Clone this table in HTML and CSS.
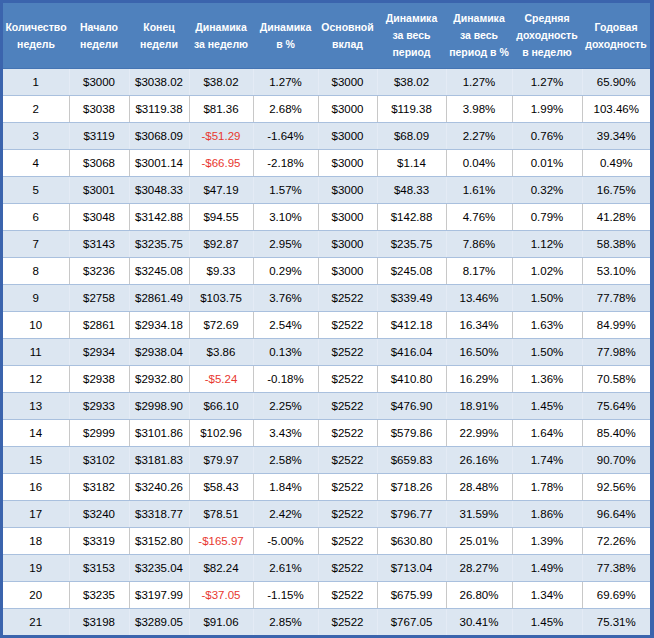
FILE: index.html
```html
<!DOCTYPE html>
<html lang="ru">
<head>
<meta charset="utf-8">
<title>Динамика</title>
<link rel="stylesheet" href="styles.css">
</head>
<body>
<div class="frame">
<table class="grid">
<colgroup>
<col class="c1"><col class="c2"><col class="c3"><col class="c4"><col class="c5"><col class="c6"><col class="c7"><col class="c8"><col class="c9"><col class="c10">
</colgroup>
<thead>
<tr>
<th>Количество<br>недель</th>
<th>Начало<br>недели</th>
<th>Конец<br>недели</th>
<th>Динамика<br>за неделю</th>
<th>Динамика<br>в %</th>
<th>Основной<br>вклад</th>
<th>Динамика<br>за весь<br>период</th>
<th>Динамика<br>за весь<br>период в %</th>
<th>Средняя<br>доходность<br>в неделю</th>
<th>Годовая<br>доходность</th>
</tr>
</thead>
<tbody>
<tr><td>1</td><td>$3000</td><td>$3038.02</td><td>$38.02</td><td>1.27%</td><td>$3000</td><td>$38.02</td><td>1.27%</td><td>1.27%</td><td>65.90%</td></tr>
<tr><td>2</td><td>$3038</td><td>$3119.38</td><td>$81.36</td><td>2.68%</td><td>$3000</td><td>$119.38</td><td>3.98%</td><td>1.99%</td><td>103.46%</td></tr>
<tr><td>3</td><td>$3119</td><td>$3068.09</td><td class="neg">-$51.29</td><td>-1.64%</td><td>$3000</td><td>$68.09</td><td>2.27%</td><td>0.76%</td><td>39.34%</td></tr>
<tr><td>4</td><td>$3068</td><td>$3001.14</td><td class="neg">-$66.95</td><td>-2.18%</td><td>$3000</td><td>$1.14</td><td>0.04%</td><td>0.01%</td><td>0.49%</td></tr>
<tr><td>5</td><td>$3001</td><td>$3048.33</td><td>$47.19</td><td>1.57%</td><td>$3000</td><td>$48.33</td><td>1.61%</td><td>0.32%</td><td>16.75%</td></tr>
<tr><td>6</td><td>$3048</td><td>$3142.88</td><td>$94.55</td><td>3.10%</td><td>$3000</td><td>$142.88</td><td>4.76%</td><td>0.79%</td><td>41.28%</td></tr>
<tr><td>7</td><td>$3143</td><td>$3235.75</td><td>$92.87</td><td>2.95%</td><td>$3000</td><td>$235.75</td><td>7.86%</td><td>1.12%</td><td>58.38%</td></tr>
<tr><td>8</td><td>$3236</td><td>$3245.08</td><td>$9.33</td><td>0.29%</td><td>$3000</td><td>$245.08</td><td>8.17%</td><td>1.02%</td><td>53.10%</td></tr>
<tr><td>9</td><td>$2758</td><td>$2861.49</td><td>$103.75</td><td>3.76%</td><td>$2522</td><td>$339.49</td><td>13.46%</td><td>1.50%</td><td>77.78%</td></tr>
<tr><td>10</td><td>$2861</td><td>$2934.18</td><td>$72.69</td><td>2.54%</td><td>$2522</td><td>$412.18</td><td>16.34%</td><td>1.63%</td><td>84.99%</td></tr>
<tr><td>11</td><td>$2934</td><td>$2938.04</td><td>$3.86</td><td>0.13%</td><td>$2522</td><td>$416.04</td><td>16.50%</td><td>1.50%</td><td>77.98%</td></tr>
<tr><td>12</td><td>$2938</td><td>$2932.80</td><td class="neg">-$5.24</td><td>-0.18%</td><td>$2522</td><td>$410.80</td><td>16.29%</td><td>1.36%</td><td>70.58%</td></tr>
<tr><td>13</td><td>$2933</td><td>$2998.90</td><td>$66.10</td><td>2.25%</td><td>$2522</td><td>$476.90</td><td>18.91%</td><td>1.45%</td><td>75.64%</td></tr>
<tr><td>14</td><td>$2999</td><td>$3101.86</td><td>$102.96</td><td>3.43%</td><td>$2522</td><td>$579.86</td><td>22.99%</td><td>1.64%</td><td>85.40%</td></tr>
<tr><td>15</td><td>$3102</td><td>$3181.83</td><td>$79.97</td><td>2.58%</td><td>$2522</td><td>$659.83</td><td>26.16%</td><td>1.74%</td><td>90.70%</td></tr>
<tr><td>16</td><td>$3182</td><td>$3240.26</td><td>$58.43</td><td>1.84%</td><td>$2522</td><td>$718.26</td><td>28.48%</td><td>1.78%</td><td>92.56%</td></tr>
<tr><td>17</td><td>$3240</td><td>$3318.77</td><td>$78.51</td><td>2.42%</td><td>$2522</td><td>$796.77</td><td>31.59%</td><td>1.86%</td><td>96.64%</td></tr>
<tr><td>18</td><td>$3319</td><td>$3152.80</td><td class="neg">-$165.97</td><td>-5.00%</td><td>$2522</td><td>$630.80</td><td>25.01%</td><td>1.39%</td><td>72.26%</td></tr>
<tr><td>19</td><td>$3153</td><td>$3235.04</td><td>$82.24</td><td>2.61%</td><td>$2522</td><td>$713.04</td><td>28.27%</td><td>1.49%</td><td>77.38%</td></tr>
<tr><td>20</td><td>$3235</td><td>$3197.99</td><td class="neg">-$37.05</td><td>-1.15%</td><td>$2522</td><td>$675.99</td><td>26.80%</td><td>1.34%</td><td>69.69%</td></tr>
<tr><td>21</td><td>$3198</td><td>$3289.05</td><td>$91.06</td><td>2.85%</td><td>$2522</td><td>$767.05</td><td>30.41%</td><td>1.45%</td><td>75.31%</td></tr>
</tbody>
</table>
</div>
</body>
</html>
```

FILE: styles.css
```css
html, body {
  margin: 0;
  padding: 0;
  background: #ffffff;
}

.frame {
  width: 647px;
  border: 3px solid #3b64ad;
  border-right-width: 4px;
  background: #ffffff;
}

.grid {
  width: 647px;
  table-layout: fixed;
  border-collapse: collapse;
  border-spacing: 0;
  font-family: "Liberation Sans", Arial, sans-serif;
}

.c1 { width: 66px; }
.c2 { width: 60px; }
.c3 { width: 60px; }
.c4 { width: 64px; }
.c5 { width: 65px; }
.c6 { width: 59px; }
.c7 { width: 69px; }
.c8 { width: 66px; }
.c9 { width: 70px; }
.c10 { width: 68px; }

.grid th {
  height: 65px;
  padding: 0;
  background: #4f81bd;
  color: #ffffff;
  font-size: 10.5px;
  font-weight: bold;
  line-height: 17px;
  text-align: center;
  vertical-align: middle;
  white-space: nowrap;
  border-bottom: 1px solid #4474b3;
}

.grid td {
  height: 26px;
  padding: 0;
  font-size: 11.5px;
  color: #000000;
  text-align: center;
  vertical-align: middle;
  white-space: nowrap;
  border-bottom: 1px solid #a9c0de;
}

.grid tbody tr:nth-child(odd) td {
  background: #dce6f1;
}

.grid tbody tr:nth-child(even) td {
  background: #ffffff;
}

.grid tbody tr:nth-child(odd) td + td {
  border-left: 1px solid #e4ebf5;
}

.grid tbody tr:nth-child(even) td + td {
  border-left: 1px solid #c8c8c8;
}

.grid tbody tr:last-child td {
  border-bottom: none;
}

.grid td.neg {
  color: #e8382f;
}
```
